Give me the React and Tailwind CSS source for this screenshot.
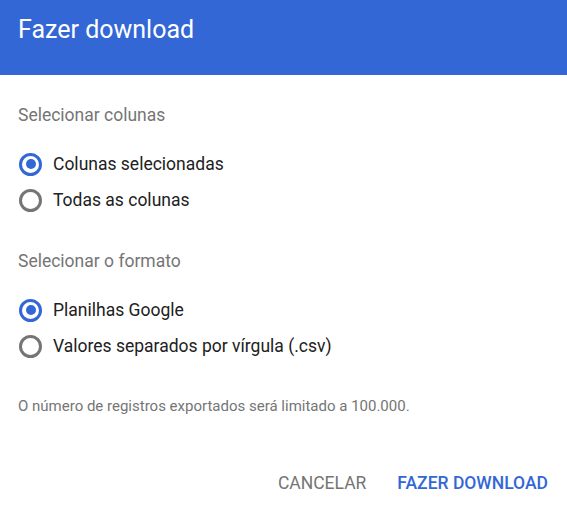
import React from "react";

function Radio({ checked, label }) {
  return (
    <div className="flex items-center h-[36px]">
      <div className="w-[23px] h-[23px] ml-[19px] flex items-center justify-center">
        {checked ? (
          <div className="w-[23px] h-[23px] rounded-full border-[3px] border-[#3367d6] flex items-center justify-center">
            <div className="w-[10px] h-[10px] rounded-full bg-[#3367d6]" />
          </div>
        ) : (
          <div className="w-[23px] h-[23px] rounded-full border-[3px] border-[#757575]" />
        )}
      </div>
      <span className="ml-[11px] text-[17.5px] text-[#212121]">{label}</span>
    </div>
  );
}

export default function App() {
  return (
    <div className="w-[567px] h-[506px] bg-white flex flex-col" style={{ fontFamily: "Roboto, 'Liberation Sans', sans-serif" }}>
      <div className="h-[75px] bg-[#3367d6] flex items-center px-[18px]">
        <h1 className="text-[25px] text-white mb-[16px]">Fazer download</h1>
      </div>
      <div className="flex flex-col">
        <div className="mt-[29px] ml-[18px] text-[17.5px] text-[#757575] leading-[22px]">Selecionar colunas</div>
        <div className="mt-[20px] flex flex-col">
          <Radio checked label="Colunas selecionadas" />
          <Radio label="Todas as colunas" />
        </div>
        <div className="mt-[32px] ml-[18px] text-[17.5px] text-[#757575] leading-[22px]">Selecionar o formato</div>
        <div className="mt-[20px] flex flex-col">
          <Radio checked label="Planilhas Google" />
          <Radio label="Valores separados por vírgula (.csv)" />
        </div>
        <div className="mt-[31px] ml-[18px] text-[15px] text-[#757575]">O número de registros exportados será limitado a 100.000.</div>
      </div>
      <div className="flex justify-end items-center mt-auto mb-[12px] pr-[19px] gap-[31px]">
        <span className="text-[17.5px] text-[#757575] leading-[22px]">CANCELAR</span>
        <span className="text-[17.5px] font-medium text-[#3367d6] leading-[22px]">FAZER DOWNLOAD</span>
      </div>
    </div>
  );
}
